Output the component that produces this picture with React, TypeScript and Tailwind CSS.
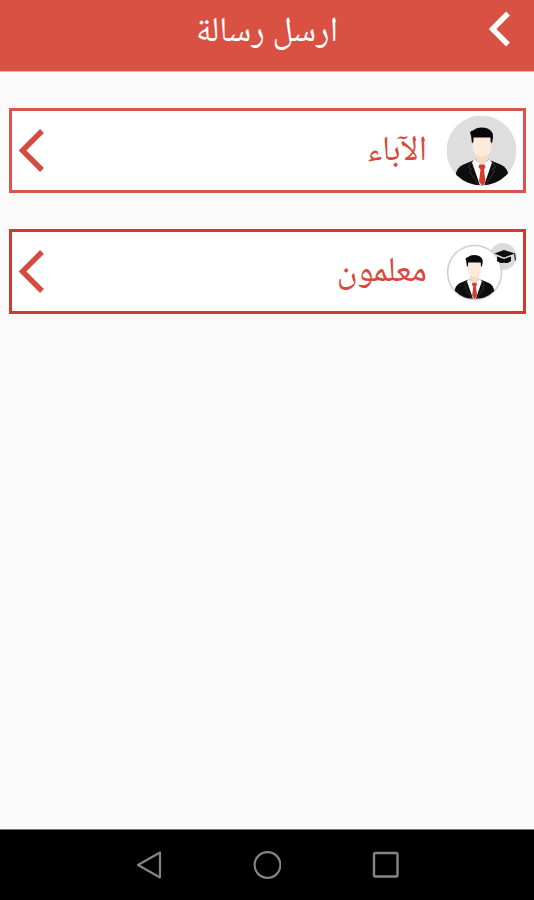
import React from 'react';

const Person: React.FC = () => (
  <>
    <path d="M9 70V60Q10 52 17 49L29 44H42L54 49Q61 52 62 60V70Z" fill="#0d0d0f" />
    <path d="M28 43.5L35.5 49L43 43.5L45.5 47L37.5 70H33.5L25.5 47Z" fill="#fff" />
    <path d="M29.5 36H41.5V44.5L35.5 50L29.5 44.5Z" fill="#f6dcc6" />
    <path d="M26 19H45V31Q45 36 41.5 39Q35.5 43 29.5 39Q26 36 26 31Z" fill="#fdeadb" />
    <path d="M25.5 28L24.5 20Q22 15.5 26.5 15Q30 12 35 12Q42 12 45 16Q47 18 46.5 22L45.5 28L44 26V22H27V26Z" fill="#08080a" />
    <path d="M33 49H38L39 51.5L37.5 54L39 66L36 71L32.5 66L34 54L32 51.5Z" fill="#db3b2b" />
    <path d="M25.5 46L22 52L25 53.5L23 56L32.5 70M45.5 46L49 52L46 53.5L48 56L38.5 70" fill="none" stroke="#4a4a4d" strokeWidth="0.7" />
  </>
);

const ParentAvatar: React.FC = () => (
  <svg viewBox="0 0 70 70" className="size-[70px] shrink-0" aria-hidden="true">
    <defs>
      <clipPath id="parent-clip">
        <circle cx="34.5" cy="34.5" r="35" />
      </clipPath>
    </defs>
    <g clipPath="url(#parent-clip)">
      <rect width="70" height="70" fill="#dedede" />
      <g transform="translate(-0.5 -0.5)">
        <Person />
      </g>
    </g>
  </svg>
);

const TeacherAvatar: React.FC = () => (
  <svg viewBox="0 0 70 70" className="size-[70px] shrink-0" aria-hidden="true">
    <defs>
      <clipPath id="teacher-clip">
        <circle cx="27.6" cy="35.5" r="26.8" />
      </clipPath>
    </defs>
    <circle cx="56" cy="19.5" r="13.5" fill="#dadada" />
    <circle cx="27.6" cy="35.5" r="27" fill="#fff" stroke="#d0d0d0" strokeWidth="1.6" />
    <g clipPath="url(#teacher-clip)">
      <g transform="translate(0.8 9) scale(0.75)">
        <Person />
      </g>
    </g>
    {/* graduation cap */}
    <path d="M47.5 16.5L57 13L68 16.5L57 20.5Z" fill="#0b0b0b" />
    <path d="M50 19.5L57 22L64 19.5V24Q60.5 27 57 25.5Q53.5 27 50 24Z" fill="#0b0b0b" />
    <path d="M67.5 16.5L68.5 23.5" fill="none" stroke="#222" strokeWidth="1.2" />
  </svg>
);

const RecipientCard: React.FC<{
  label: string;
  avatar: React.ReactNode;
  className: string;
}> = ({ label, avatar, className }) => (
  <button type="button" className={`flex h-[85px] w-full items-center gap-5 border-3 bg-white px-1.5 text-[#d8493c] ${className}`}>
    {avatar}
    <span className="flex-1 pt-1 text-start text-[35px] leading-[60px]">{label}</span>
    <svg viewBox="0 0 28 44" className="h-11 w-7 shrink-0" aria-hidden="true">
      <path d="M24 2L4.5 21.5L24 41" fill="none" stroke="#d44c41" strokeWidth="5.4" />
    </svg>
  </button>
);

const App: React.FC = () => {
  return (
    <div
      dir="rtl"
      className="flex min-h-screen flex-col bg-[#fafafa] font-['Noto_Naskh_Arabic','Noto_Sans_Arabic','DejaVu_Sans',sans-serif]"
    >
      <header className="grid h-18 grid-cols-[48px_1fr_48px] items-start border-b border-[#e9aaa2] bg-[#d95143] text-white">
        <button type="button" aria-label="رجوع" className="flex h-[58px] items-center justify-center ps-5">
          <svg viewBox="0 0 22 36" className="h-9 w-[22px]" aria-hidden="true">
            <path d="M19 2.5L3.5 18L19 33.5" fill="none" stroke="#fff" strokeWidth="5.4" />
          </svg>
        </button>
        <h1 className="pt-1 text-center text-[35px] leading-[60px]">ارسل رسالة</h1>
      </header>

      <main className="flex flex-1 flex-col gap-9 ps-2 pe-[9px] pt-9">
        <RecipientCard label="الآباء" avatar={<ParentAvatar />} className="border-[#d6554d]" />
        <RecipientCard label="معلمون" avatar={<TeacherAvatar />} className="border-[#d23a2c]" />
      </main>

      <nav dir="ltr" className="flex h-[71px] items-center justify-center gap-[90px] border-t border-[#777] bg-black">
        <button type="button" aria-label="Back">
          <svg viewBox="0 0 28 30" className="h-[30px] w-7" fill="none" stroke="#858585" strokeWidth="2.2" strokeLinejoin="round">
            <path d="M3 15L25 2.5V27.5Z" />
          </svg>
        </button>
        <button type="button" aria-label="Home">
          <svg viewBox="0 0 28 30" className="h-[30px] w-7" fill="none" stroke="#858585" strokeWidth="2.2">
            <circle cx="14.5" cy="15" r="12.9" />
          </svg>
        </button>
        <button type="button" aria-label="Recents">
          <svg viewBox="0 0 28 30" className="h-[30px] w-7" fill="none" stroke="#858585" strokeWidth="2.4">
            <rect x="3" y="3" width="23.5" height="23.5" rx="1.5" />
          </svg>
        </button>
      </nav>
    </div>
  );
};

export default App;
